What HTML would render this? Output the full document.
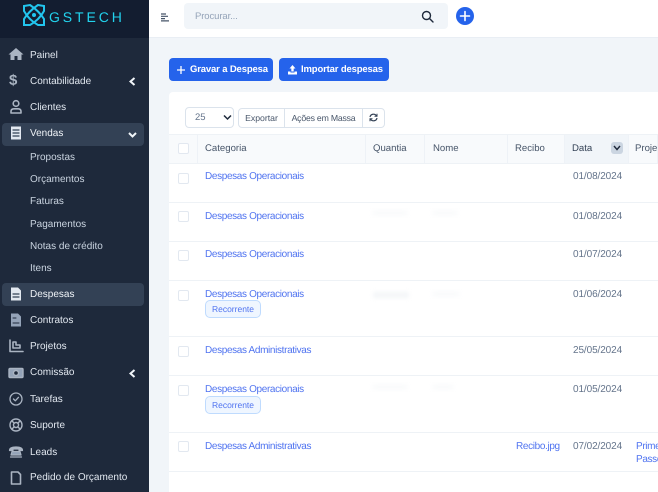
<!DOCTYPE html>
<html lang="pt"><head><meta charset="utf-8"><title>Despesas</title>
<style>
*{box-sizing:border-box}
html,body{margin:0;padding:0}
body{width:658px;height:492px;overflow:hidden;position:relative;background:#f1f5f9;font-family:"Liberation Sans",sans-serif;font-size:10px;color:#475569;text-rendering:geometricPrecision}
.a{position:absolute;white-space:nowrap}
#side{position:absolute;left:0;top:0;width:149px;height:492px;background:#1e293b}
#logo{position:absolute;left:0;top:0;width:149px;height:38px;background:#131d30}
.m{position:absolute;left:30px;margin-top:1px;color:#e2e8f0;font-size:10px;line-height:14px;white-space:nowrap}
.s{position:absolute;left:30px;margin-top:1px;color:#cbd5e1;font-size:10px;line-height:14px;white-space:nowrap}
.hl{position:absolute;left:2px;width:142px;height:23px;background:#334155;border-radius:4px}
.ic{position:absolute;left:8px;width:16px;height:16px;fill:none;stroke:#aab4c2;stroke-width:1.6;stroke-linecap:round;stroke-linejoin:round}
.ch{position:absolute;left:128px;width:9px;height:9px;fill:none;stroke:#f1f5f9;stroke-width:2}
.btn{position:absolute;top:58px;height:23px;background:#2563eb;color:#fff;border-radius:4px;font-weight:bold;font-size:9.5px;line-height:24px;white-space:nowrap;letter-spacing:-.15px}
.th{position:absolute;top:135px;height:28px;line-height:28px;font-size:9.6px;color:#475569;padding-left:7px;background:#f8fafc;border-right:1px solid #eef2f7}
.ln{position:absolute;left:169px;width:489px;height:1px;background:#eef2f6}
.cb{position:absolute;left:178px;width:11px;height:11px;background:#fff;border:1px solid #e2e8f0;border-radius:2px}
.l{position:absolute;left:205px;color:#4f73f0;font-size:10px;letter-spacing:-.35px;line-height:14px;white-space:nowrap}
.d{position:absolute;left:573px;color:#64748b;font-size:10px;letter-spacing:-.1px;line-height:14px;white-space:nowrap}
.b{position:absolute;left:205px;width:56px;height:18px;background:#eff6ff;border:1px solid #bfdbfe;border-radius:5px;color:#4f73f0;font-size:8.5px;line-height:16px;text-align:center}
.sm{position:absolute;background:#e8ecf1;filter:blur(2px);opacity:.3;height:4px}
.t{position:absolute;top:108px;height:20px;background:#fff;border:1px solid #dbe3ec;font-size:8.7px;line-height:18px;text-align:center;color:#475569}
</style></head><body>
<div id="side">
<div id="logo">
<svg class="a" style="left:21px;top:2px" width="26" height="26" viewBox="0 0 26 26" fill="none" stroke="#22c5ee" stroke-width="2"><path d="M3 4 L9 3 Q18 9 23 17 L23 23 L17 23 Q8 18 3 9Z"/><path d="M23 4 L17 3 Q8 9 3 17 L3 23 L9 23 Q18 18 23 9Z"/><circle cx="13" cy="13" r="2" fill="#22c5ee" stroke="none"/></svg>
<div class="a" style="left:49px;top:8px;color:#22d3ee;font-size:14px;line-height:18px;letter-spacing:2.9px">GSTECH</div>
</div>
<div class="hl" style="top:123px"></div>
<div class="hl" style="top:283px"></div>

<svg class="ic" style="top:46px;fill:#aab4c2;stroke:none" viewBox="0 0 16 16"><path d="M8 2 L15.500 8.500 L13.500 8.500 L13.500 14 L9.500 14 L9.500 10 L6.500 10 L6.500 14 L2.500 14 L2.500 8.500 L.5 8.500Z"/></svg>
<div class="m" style="top:48px">Painel</div>

<div class="a" style="left:9px;top:72px;font-size:15px;line-height:18px;font-weight:bold;color:#aab4c2">$</div>
<div class="m" style="top:74px">Contabilidade</div>
<svg class="ch" style="top:77px" viewBox="0 0 9 9"><path d="M6.500 1 L2.500 4.500 L6.500 8"/></svg>

<svg class="ic" style="top:99px" viewBox="0 0 16 16"><circle cx="8" cy="4.500" r="2.800"/><path d="M3 14V12.500Q3 9.800 6 9.800H10Q13 9.800 13 12.500V14Z"/></svg>
<div class="m" style="top:100px">Clientes</div>

<svg class="ic" style="top:125px;fill:#e2e8f0;stroke:none" viewBox="0 0 16 16"><path d="M3 1.500H13V14.500H3Z"/><path d="M5 5H11M5 8H11M5 11H11" stroke="#334155" stroke-width="1.200"/></svg>
<div class="m" style="top:126px;color:#f1f5f9">Vendas</div>
<svg class="ch" style="top:130px" viewBox="0 0 9 9"><path d="M1 3 L4.500 6.500 L8 3"/></svg>

<div class="s" style="top:150px">Propostas</div>
<div class="s" style="top:172px">Orçamentos</div>
<div class="s" style="top:194px">Faturas</div>
<div class="s" style="top:217px">Pagamentos</div>
<div class="s" style="top:239px">Notas de crédito</div>
<div class="s" style="top:261px">Itens</div>

<svg class="ic" style="top:286px;fill:#e2e8f0;stroke:none" viewBox="0 0 16 16"><path d="M3 1.500H10L13 4.500V14.500H3Z"/><path d="M5 8H11M5 11H11" stroke="#334155" stroke-width="1.200"/></svg>
<div class="m" style="top:287px;color:#f1f5f9">Despesas</div>

<svg class="ic" style="top:312px;fill:#94a3b8;stroke:none" viewBox="0 0 16 16"><path d="M3 1.500H10L13 4.500V14.500H3Z"/><path d="M5 11H11M5 6H8" stroke="#1e293b" stroke-width="1"/></svg>
<div class="m" style="top:313px">Contratos</div>

<svg class="ic" style="top:338px" viewBox="0 0 16 16"><path d="M2 2V13.500H15M5 4H8V7H12V10H5Z"/></svg>
<div class="m" style="top:339px">Projetos</div>

<svg class="ic" style="top:365px;stroke-width:1.400" viewBox="0 0 16 16"><rect x="1" y="3.500" width="14" height="9" rx="1" fill="#94a3b8" stroke="#aab4c2"/><circle cx="8" cy="8" r="2.500" fill="#1e293b" stroke="#aab4c2"/></svg>
<div class="m" style="top:365px">Comissão</div>
<svg class="ch" style="top:369px" viewBox="0 0 9 9"><path d="M6.500 1 L2.500 4.500 L6.500 8"/></svg>

<svg class="ic" style="top:391px;stroke-width:1.300" viewBox="0 0 16 16"><circle cx="8" cy="8" r="6"/><path d="M5.500 8L7.300 9.800L10.500 6.300"/></svg>
<div class="m" style="top:392px">Tarefas</div>

<svg class="ic" style="top:417px;stroke-width:1.400" viewBox="0 0 16 16"><circle cx="8" cy="8" r="6"/><circle cx="8" cy="8" r="2.500"/><path d="M3.800 3.800L6.200 6.200M12.200 3.800L9.800 6.200M3.800 12.200L6.200 9.800M12.200 12.200L9.800 9.800"/></svg>
<div class="m" style="top:418px">Suporte</div>

<svg class="ic" style="top:444px;stroke-width:1.200" viewBox="0 0 16 16"><path d="M1.500 6.500Q1.500 3 8 3T14.500 6.500H11V5H5V6.500Z" fill="#aab4c2"/><path d="M4 7.500H12L13 11H3Z" fill="#94a3b8"/><path d="M2.500 13H13.500"/></svg>
<div class="m" style="top:445px">Leads</div>

<svg class="ic" style="top:470px" viewBox="0 0 16 16"><path d="M3.500 2H10L12.500 4.500V14H3.500Z"/></svg>
<div class="m" style="top:470px">Pedido de Orçamento</div>
</div>

<div class="a" style="left:149px;top:0;width:509px;height:38px;background:#fff;border-bottom:1px solid #e9eef4"></div>
<svg class="a" style="left:160px;top:13px" width="10" height="9" viewBox="0 0 10 9" stroke="#475569" stroke-width="1.200"><path d="M1 1H6M1 3.300H8M1 5.600H5M1 7.900H9"/></svg>
<div class="a" style="left:184px;top:3px;width:264px;height:26px;background:#f1f5f9;border-radius:4px"></div>
<div class="a" style="left:195px;top:10px;font-size:9.500px;letter-spacing:-.1px;line-height:14px;color:#94a3b8">Procurar...</div>
<svg class="a" style="left:421px;top:10px" width="13" height="13" viewBox="0 0 13 13" fill="none" stroke="#1e293b" stroke-width="1.400" stroke-linecap="round"><circle cx="5.500" cy="5.500" r="4"/><path d="M8.500 8.500L12 12"/></svg>
<div class="a" style="left:456px;top:7px;width:18px;height:18px;border-radius:50%;background:#2563eb"></div>
<svg class="a" style="left:456px;top:7px" width="18" height="18" viewBox="0 0 18 18" stroke="#fff" stroke-width="1.600" stroke-linecap="round"><path d="M9 4.500V13.500M4.500 9H13.500"/></svg>

<div class="btn" style="left:169px;width:104px;padding-left:21px">Gravar a Despesa</div>
<svg class="a" style="left:176px;top:65px" width="10" height="10" viewBox="0 0 10 10" stroke="#fff" stroke-width="1.300"><path d="M5 1V9M1 5H9"/></svg>
<div class="btn" style="left:279px;width:110px;padding-left:22px">Importar despesas</div>
<svg class="a" style="left:287px;top:64px" width="11" height="11" viewBox="0 0 11 11" fill="#fff"><path d="M5.500 1L8.500 4.500H6.700V7.500H4.300V4.500H2.500Z"/><path d="M1 7.500H3.500V8.500H7.500V7.500H10V10.500H1Z"/></svg>

<div class="a" style="left:169px;top:92px;width:489px;height:400px;background:#fff;border-radius:4px 0 0 0"></div>

<div class="a" style="left:185px;top:107px;width:49px;height:21px;background:#fff;border:1px solid #dbe3ec;border-radius:4px;font-size:9.500px;line-height:20px;padding-left:9px;color:#64748b">25</div>
<svg class="a" style="left:223px;top:114px" width="9" height="7" viewBox="0 0 9 7" fill="none" stroke="#1e293b" stroke-width="1.500"><path d="M1 1.500L4.500 5L8 1.500"/></svg>
<div class="t" style="left:238px;width:47px;border-radius:4px 0 0 4px">Exportar</div>
<div class="t" style="left:284px;width:79px;letter-spacing:-.2px">Ações em Massa</div>
<div class="t" style="left:362px;width:23px;border-radius:0 4px 4px 0"></div>
<svg class="a" style="left:369px;top:113px" width="9" height="9" viewBox="0 0 9 9" fill="none" stroke="#334155" stroke-width="1.200"><path d="M1 4A3.500 3.500 0 0 1 7.500 3M8 5A3.500 3.500 0 0 1 1.500 6"/><path d="M8 .8V3.300H5.500M1 8.200V5.700H3.500" stroke-width="1"/></svg>

<div class="a" style="left:169px;top:134px;width:489px;height:1px;background:#eef2f6"></div>
<div class="th" style="left:169px;width:29px"></div>
<div class="th" style="left:198px;width:168px">Categoria</div>
<div class="th" style="left:366px;width:59px">Quantia</div>
<div class="th" style="left:425px;width:83px;padding-left:8px">Nome</div>
<div class="th" style="left:508px;width:57px">Recibo</div>
<div class="th" style="left:565px;width:64px;background:#f1f5f9;color:#334155">Data</div>
<div class="th" style="left:629px;width:29px;padding-left:6px;overflow:hidden">Projeto</div>
<div class="a" style="left:611px;top:142px;width:12px;height:12px;border-radius:3px;background:#cbd5e1"></div>
<svg class="a" style="left:613px;top:145px" width="8" height="6" viewBox="0 0 8 6" fill="none" stroke="#1e293b" stroke-width="1.400"><path d="M1 1L4 4.500L7 1"/></svg>
<div class="cb" style="top:143px"></div>

<div class="ln" style="top:163px"></div>
<div class="ln" style="top:202px"></div>
<div class="ln" style="top:241px"></div>
<div class="ln" style="top:280px"></div>
<div class="ln" style="top:336px"></div>
<div class="ln" style="top:375px"></div>
<div class="ln" style="top:432px"></div>
<div class="ln" style="top:471px"></div>

<div class="cb" style="top:173px"></div><div class="l" style="top:170px">Despesas Operacionais</div><div class="d" style="top:170px">01/08/2024</div>
<div class="cb" style="top:211px"></div><div class="l" style="top:210px">Despesas Operacionais</div><div class="d" style="top:210px">01/08/2024</div>
<div class="cb" style="top:250px"></div><div class="l" style="top:248px">Despesas Operacionais</div><div class="d" style="top:248px">01/07/2024</div>
<div class="cb" style="top:290px"></div><div class="l" style="top:288px">Despesas Operacionais</div><div class="b" style="top:300px">Recorrente</div><div class="d" style="top:288px">01/06/2024</div>
<div class="cb" style="top:346px"></div><div class="l" style="top:344px">Despesas Administrativas</div><div class="d" style="top:344px">25/05/2024</div>
<div class="cb" style="top:385px"></div><div class="l" style="top:383px">Despesas Operacionais</div><div class="b" style="top:396px">Recorrente</div><div class="d" style="top:383px">01/05/2024</div>
<div class="cb" style="top:441px"></div><div class="l" style="top:440px">Despesas Administrativas</div><div class="l" style="left:516px;top:440px">Recibo.jpg</div><div class="d" style="top:440px">07/02/2024</div>
<div class="l" style="left:636px;top:440px">Primeiro</div><div class="l" style="left:636px;top:453px">Passo</div>

<div class="sm" style="left:373px;top:211px;width:34px"></div>
<div class="sm" style="left:433px;top:211px;width:24px"></div>
<div class="sm" style="left:373px;top:292px;width:36px;height:6px;opacity:.5"></div>
<div class="sm" style="left:433px;top:292px;width:26px"></div>
<div class="sm" style="left:373px;top:385px;width:34px"></div>
<div class="sm" style="left:433px;top:385px;width:20px"></div>
</body></html>
